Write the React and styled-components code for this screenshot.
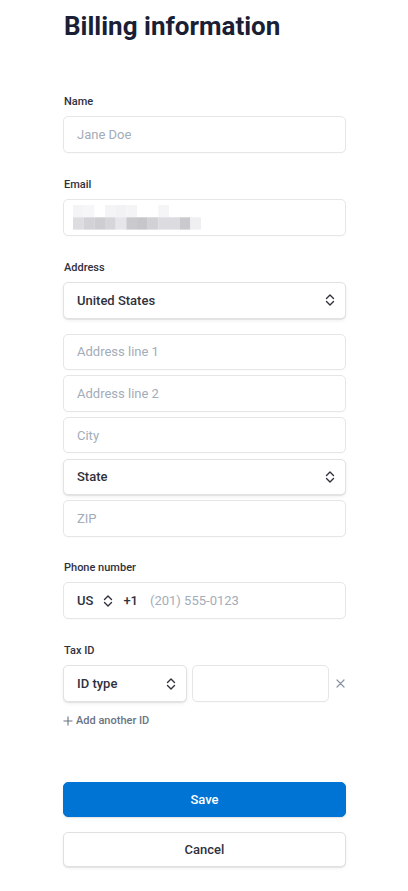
import styled, { createGlobalStyle } from "styled-components";

const GlobalStyle = createGlobalStyle`
  html, body {
    margin: 0;
    padding: 0;
    background: #ffffff;
  }
  body {
    font-family: Roboto, "Noto Sans", "Liberation Sans", sans-serif;
    -webkit-font-smoothing: antialiased;
  }
  * {
    box-sizing: border-box;
  }
`;

const Page = styled.div`
  width: 408px;
  padding: 10px 0 24px 63px;
`;

const Column = styled.div`
  width: 283px;
  display: flex;
  flex-direction: column;
`;

const Title = styled.h1`
  margin: 0 0 0 1px;
  font-size: 26px;
  line-height: 32px;
  font-weight: 700;
  color: #1a1f36;
`;

const Field = styled.div`
  display: flex;
  flex-direction: column;
  margin-top: ${(p) => p.$top || 24.5}px;
`;

const Label = styled.label`
  display: block;
  margin: 0 0 6px 1px;
  font-size: 11px;
  line-height: 16px;
  font-weight: 500;
  color: #30313d;
`;

const Stack = styled.div`
  display: flex;
  flex-direction: column;
  margin-top: 15px;
  gap: 5.2px;
`;

const Box = styled.div`
  height: 36.5px;
  display: flex;
  align-items: center;
  padding: 0 12px 0 13px;
  border: 1px solid #e6e6e6;
  border-radius: 5px;
  background: #fff;
  box-shadow: 0 1px 1px rgba(0, 0, 0, 0.02);
  font-size: 13px;
  color: #30313d;
  width: ${(p) => (p.$width ? `${p.$width}px` : "auto")};
  flex: ${(p) => (p.$grow ? 1 : "none")};
`;

const SelectBox = styled(Box)`
  justify-content: space-between;
  border-color: #e2e2e2;
  box-shadow: 0 1px 1px rgba(0, 0, 0, 0.08), 0 2px 4px rgba(0, 0, 0, 0.05);
  font-weight: 500;
  padding-right: 9px;
`;

const MosaicBox = styled(Box)`
  padding-left: 9px;
`;

const Placeholder = styled.span`
  color: #a3acb9;
  font-size: 13px;
  margin-left: ${(p) => p.$gapLeft || 0}px;
`;

const Row = styled.div`
  display: flex;
  align-items: center;
  gap: ${(p) => p.$gap || 5}px;
`;

const PhoneCode = styled.span`
  font-weight: 500;
  color: #30313d;
`;

const RemoveButton = styled.button`
  border: 0;
  background: none;
  padding: 0;
  width: 12px;
  display: flex;
  align-items: center;
  justify-content: center;
  color: #8792a2;
`;

const AddLink = styled.div`
  display: flex;
  align-items: center;
  gap: 3px;
  margin-top: 11px;
  font-size: 11px;
  line-height: 16px;
  font-weight: 500;
  color: #6a7383;
`;

const Actions = styled.div`
  display: flex;
  flex-direction: column;
  gap: 15px;
  margin-top: 53.5px;
`;

const Button = styled.button`
  height: 35px;
  border-radius: 5px;
  font-family: inherit;
  font-size: 13px;
  font-weight: 500;
  cursor: pointer;
  border: 1px solid ${(p) => (p.$primary ? "#0074d4" : "#e0e0e0")};
  background: ${(p) => (p.$primary ? "#0074d4" : "#ffffff")};
  color: ${(p) => (p.$primary ? "#ffffff" : "#30313d")};
  box-shadow: 0 1px 1px rgba(0, 0, 0, 0.08), 0 2px 4px rgba(0, 0, 0, 0.04);
`;

const Chevrons = () => (
  <svg width="12" height="14" viewBox="0 0 12 14" fill="none">
    <path d="M2.5 5.5 L6 2 L9.5 5.5" stroke="#30313d" strokeWidth="1.4" strokeLinecap="round" strokeLinejoin="round" />
    <path d="M2.5 8.5 L6 12 L9.5 8.5" stroke="#30313d" strokeWidth="1.4" strokeLinecap="round" strokeLinejoin="round" />
  </svg>
);

// redacted email, drawn as a pixel mosaic
const mosaicTop = [
  [0, "#f4f4f6"], [1, "#f6f6f8"], [3, "#f4f4f6"], [4, "#f2f2f4"], [5, "#f4f4f6"], [8, "#f5f5f7"],
];
const mosaicBottom = [
  "#dddde1", "#d2d2d7", "#cdcdd2", "#d6d6da", "#e6e6ea", "#c9c9ce",
  "#c6c6cb", "#d1d1d6", "#dcdce0", "#dcdce0", "#c9c9ce", "#efeff1",
];

const Mosaic = () => (
  <svg width="128" height="25" viewBox="0 0 128 25">
    {mosaicTop.map(([i, c]) => (
      <rect key={`t${i}`} x={i * 10.67} y="0" width="10.7" height="12.3" fill={c} />
    ))}
    {mosaicBottom.map((c, i) => (
      <rect key={`b${i}`} x={i * 10.67} y="12.3" width="10.7" height="12.3" fill={c} />
    ))}
  </svg>
);

export default function App() {
  return (
    <Page>
      <GlobalStyle />
      <Column>
        <Title>Billing information</Title>

        <Field $top={52}>
          <Label>Name</Label>
          <Box>
            <Placeholder>Jane Doe</Placeholder>
          </Box>
        </Field>

        <Field>
          <Label>Email</Label>
          <MosaicBox>
            <Mosaic />
          </MosaicBox>
        </Field>

        <Field>
          <Label>Address</Label>
          <SelectBox>
            <span>United States</span>
            <Chevrons />
          </SelectBox>
          <Stack>
            <Box>
              <Placeholder>Address line 1</Placeholder>
            </Box>
            <Box>
              <Placeholder>Address line 2</Placeholder>
            </Box>
            <Box>
              <Placeholder>City</Placeholder>
            </Box>
            <SelectBox>
              <span>State</span>
              <Chevrons />
            </SelectBox>
            <Box>
              <Placeholder>ZIP</Placeholder>
            </Box>
          </Stack>
        </Field>

        <Field $top={23.5}>
          <Label>Phone number</Label>
          <Box>
            <Row $gap={9}>
              <PhoneCode>US</PhoneCode>
              <Chevrons />
              <PhoneCode>+1</PhoneCode>
              <Placeholder $gapLeft={3}>(201) 555-0123</Placeholder>
            </Row>
          </Box>
        </Field>

        <Field>
          <Label>Tax ID</Label>
          <Row>
            <SelectBox $width={124}>
              <span>ID type</span>
              <Chevrons />
            </SelectBox>
            <Box $grow />
            <RemoveButton aria-label="Remove">
              <svg width="9" height="9" viewBox="0 0 9 9">
                <path d="M1 1 L8 8 M8 1 L1 8" stroke="#8792a2" strokeWidth="1.2" strokeLinecap="round" />
              </svg>
            </RemoveButton>
          </Row>
          <AddLink>
            <svg width="10" height="10" viewBox="0 0 10 10">
              <path d="M5 0.5 V9.5 M0.5 5 H9.5" stroke="#6a7383" strokeWidth="1.1" />
            </svg>
            Add another ID
          </AddLink>
        </Field>

        <Actions>
          <Button $primary>Save</Button>
          <Button>Cancel</Button>
        </Actions>
      </Column>
    </Page>
  );
}
